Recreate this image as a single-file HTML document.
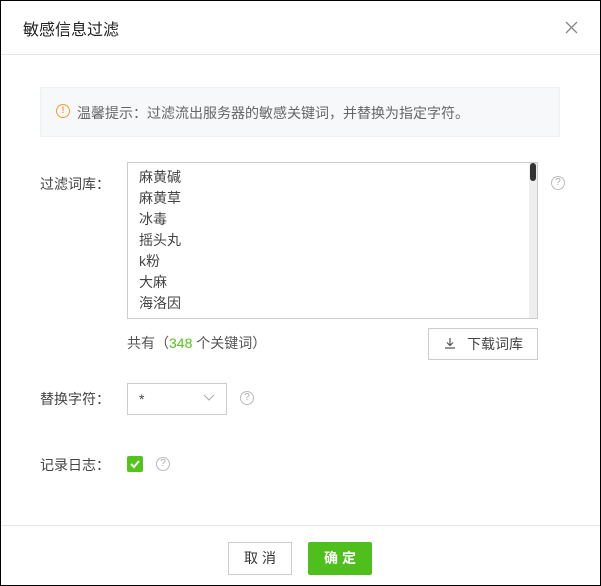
<!DOCTYPE html>
<html><head><meta charset="utf-8"><style>
*{box-sizing:border-box;margin:0;padding:0}
body{width:601px;height:586px;background:#fff;font-family:"Liberation Sans","Noto Sans CJK SC",sans-serif;position:relative;overflow:hidden;}
.a{position:absolute}
.t{font-size:14px;color:#444;}
.help{position:absolute;width:14px;height:14px;border:1px solid #bbb;border-radius:50%;font-size:10px;line-height:12px;text-align:center;color:#aaa}
</style></head><body>
<div class="a" style="left:0;top:0;width:601px;height:586px;border:1px solid #000"></div>
<div class="a" style="left:23px;top:16px;font-size:16px;color:#222">敏感信息过滤</div>
<svg class="a" style="left:565px;top:21px" width="13" height="13"><path d="M1 1L12 12M12 1L1 12" stroke="#888" stroke-width="1.3"/></svg>
<div class="a" style="left:1px;right:1px;top:54px;border-top:1px solid #e5e5e5"></div>
<div class="a" style="left:40px;top:87px;width:520px;height:50px;background:#f7f8fa;border:1px solid #eef0f2"></div>
<div class="a" style="left:56px;top:104px;width:14px;height:14px;border:1.5px solid #f0a030;border-radius:50%;color:#f0a030;font-size:9px;font-weight:bold;text-align:center;line-height:11px">!</div>
<div class="a t" style="left:77px;top:103px;color:#666">温馨提示：过滤流出服务器的敏感关键词，并替换为指定字符。</div>
<div class="a t" style="left:40px;top:174px">过滤词库：</div>
<div class="a" style="left:127px;top:162px;width:411px;height:157px;border:1px solid #ccc"></div>
<div class="a" style="left:529px;top:163px;width:8px;height:155px;background:#eee"></div>
<div class="a" style="left:530px;top:163px;width:6px;height:18px;background:#333;border-radius:3px"></div>
<div class="a t" style="left:139px;top:167px;line-height:21px;color:#444">麻黄碱<br>麻黄草<br>冰毒<br>摇头丸<br>k粉<br>大麻<br>海洛因</div>
<div class="help" style="left:551px;top:176px">?</div>
<div class="a t" style="left:127px;top:333px;color:#555">共有（<span style="color:#52c41a">348</span> 个关键词）</div>
<div class="a" style="left:428px;top:328px;width:110px;height:32px;border:1px solid #ccc;font-size:14px;color:#444;line-height:30px;padding-left:38px">下载词库</div>
<svg class="a" style="left:444px;top:337px" width="12" height="12"><path d="M6 1V8M3 5.5L6 8.5L9 5.5M1 11H11" stroke="#555" stroke-width="1.2" fill="none"/></svg>
<div class="a t" style="left:40px;top:389px">替换字符：</div>
<div class="a" style="left:127px;top:383px;width:100px;height:32px;border:1px solid #ccc;font-size:14px;color:#444;line-height:30px;padding-left:11px">*</div>
<svg class="a" style="left:203px;top:394px" width="12" height="8"><path d="M1 1L6 6L11 1" stroke="#aaa" fill="none"/></svg>
<div class="help" style="left:240px;top:391px">?</div>
<div class="a t" style="left:40px;top:455px">记录日志：</div>
<div class="a" style="left:127px;top:456px;width:16px;height:16px;background:#52c41a;border-radius:2px"></div>
<svg class="a" style="left:127px;top:456px" width="16" height="16"><path d="M4 8L7 11L12 5" stroke="#fff" stroke-width="2" fill="none"/></svg>
<div class="help" style="left:156px;top:457px">?</div>
<div class="a" style="left:1px;right:1px;top:525px;border-top:1px solid #e5e5e5"></div>
<div class="a" style="left:228px;top:542px;width:64px;height:33px;border:1px solid #ccc;font-size:14px;color:#333;text-align:center;line-height:31px;letter-spacing:4px;padding-left:4px">取消</div>
<div class="a" style="left:308px;top:542px;width:64px;height:33px;background:#4fbf1e;border-radius:2px;font-size:14px;color:#fff;font-weight:bold;text-align:center;line-height:33px;letter-spacing:4px;padding-left:4px">确定</div>
</body></html>
